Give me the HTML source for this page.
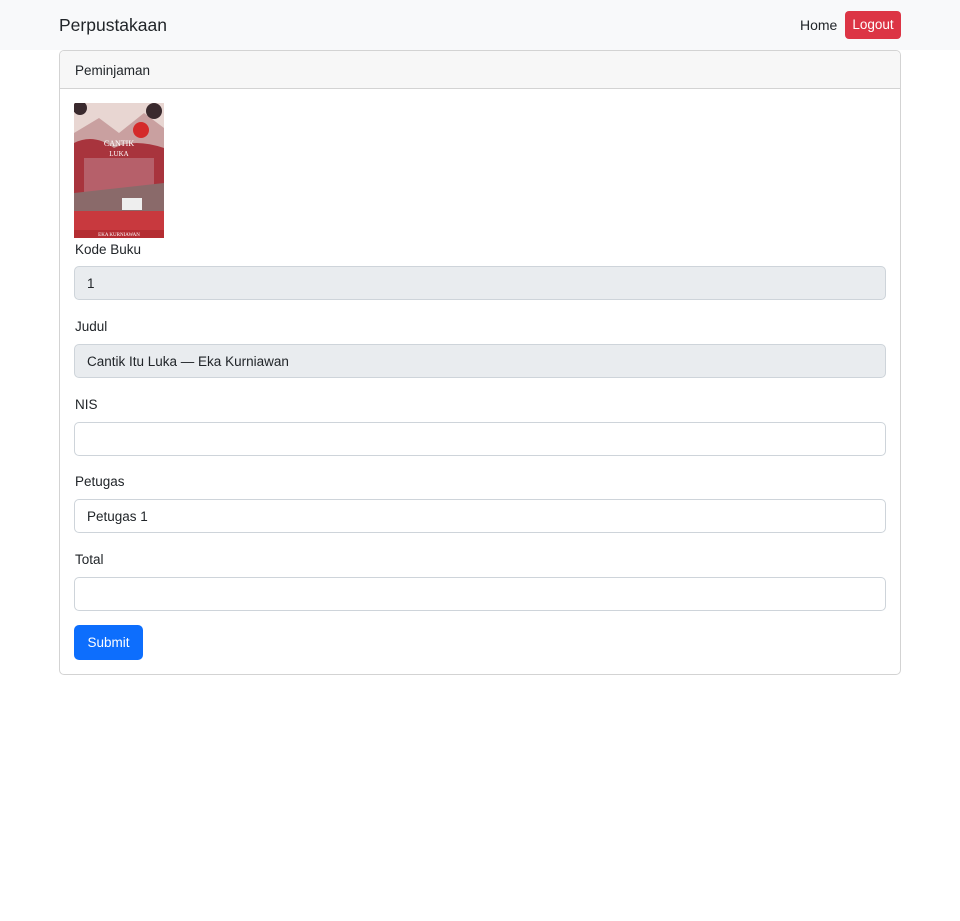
<!DOCTYPE html>
<html><head><style>
*{box-sizing:border-box}
body{margin:0;font-family:"Liberation Sans",sans-serif;font-size:14px;color:#212529;background:#fff}
.nav{height:50px;background:#f8f9fa;position:relative}
.brand{position:absolute;left:59px;top:15px;font-size:17.5px}
.home{position:absolute;left:800px;top:17px;font-size:14px}
.logout{position:absolute;left:845px;top:11px;width:56px;height:28px;background:#dc3545;color:#fff;border-radius:4px;font-size:13.5px;text-align:center;line-height:28px}
.card{position:absolute;left:59px;top:50px;width:842px;height:625px;border:1px solid #d3d3d3;border-radius:5px;overflow:hidden}
.ch{height:38px;background:#f7f7f7;border-bottom:1px solid #d3d3d3;padding:12px 15px;font-size:13.5px}
.lbl{position:absolute;left:15px;font-size:13.5px}
.in{position:absolute;left:14px;width:812px;height:34px;border:1px solid #ced4da;border-radius:5px;padding:9px 12px;font-size:13.5px;background:#fff}
.dis{background:#e9ecef}
.btn{position:absolute;left:14px;top:574px;width:69px;height:35px;background:#0d6efd;color:#fff;border-radius:5px;text-align:center;line-height:36px;font-size:13.5px}
</style></head><body>
<div class="nav"><span class="brand">Perpustakaan</span><span class="home">Home</span><span class="logout">Logout</span></div>
<div class="card">
<div class="ch">Peminjaman</div>
<svg style="position:absolute;left:14px;top:52px" width="90" height="135" viewBox="0 0 90 135">
<rect width="90" height="135" fill="#e8d6d2"/>
<path d="M0 30 L25 15 L45 30 L70 10 L90 25 L90 135 L0 135Z" fill="#c9a0a0"/>
<circle cx="67" cy="27" r="8" fill="#d42a2a"/>
<path d="M0 40 Q20 30 40 45 Q60 35 90 45 L90 90 L0 90Z" fill="#a8343d"/>
<rect x="10" y="55" width="70" height="35" fill="#b6606a"/>
<path d="M0 90 L90 80 L90 110 L0 110Z" fill="#8a6a6a"/>
<rect x="48" y="95" width="20" height="12" fill="#eee"/>
<path d="M0 108 L90 108 L90 135 L0 135Z" fill="#c8393e"/>
<rect x="0" y="127" width="90" height="8" fill="#b42d32"/>
<circle cx="80" cy="8" r="8" fill="#3a2a2e"/>
<circle cx="6" cy="5" r="7" fill="#3a2a2e"/>
<text x="45" y="43" font-size="8" fill="#fff" text-anchor="middle" font-family="Liberation Serif">CANTIK</text>
<text x="45" y="53" font-size="7" fill="#fff" text-anchor="middle" font-family="Liberation Serif">LUKA</text>
<text x="45" y="133" font-size="5" fill="#fff" text-anchor="middle" font-family="Liberation Serif">EKA KURNIAWAN</text>
</svg>
<div class="lbl" style="top:191px">Kode Buku</div>
<div class="in dis" style="top:215px">1</div>
<div class="lbl" style="top:268px">Judul</div>
<div class="in dis" style="top:293px">Cantik Itu Luka — Eka Kurniawan</div>
<div class="lbl" style="top:346px">NIS</div>
<div class="in" style="top:371px"></div>
<div class="lbl" style="top:423px">Petugas</div>
<div class="in" style="top:448px">Petugas 1</div>
<div class="lbl" style="top:501px">Total</div>
<div class="in" style="top:526px"></div>
<div class="btn">Submit</div>
</div>
</body></html>
